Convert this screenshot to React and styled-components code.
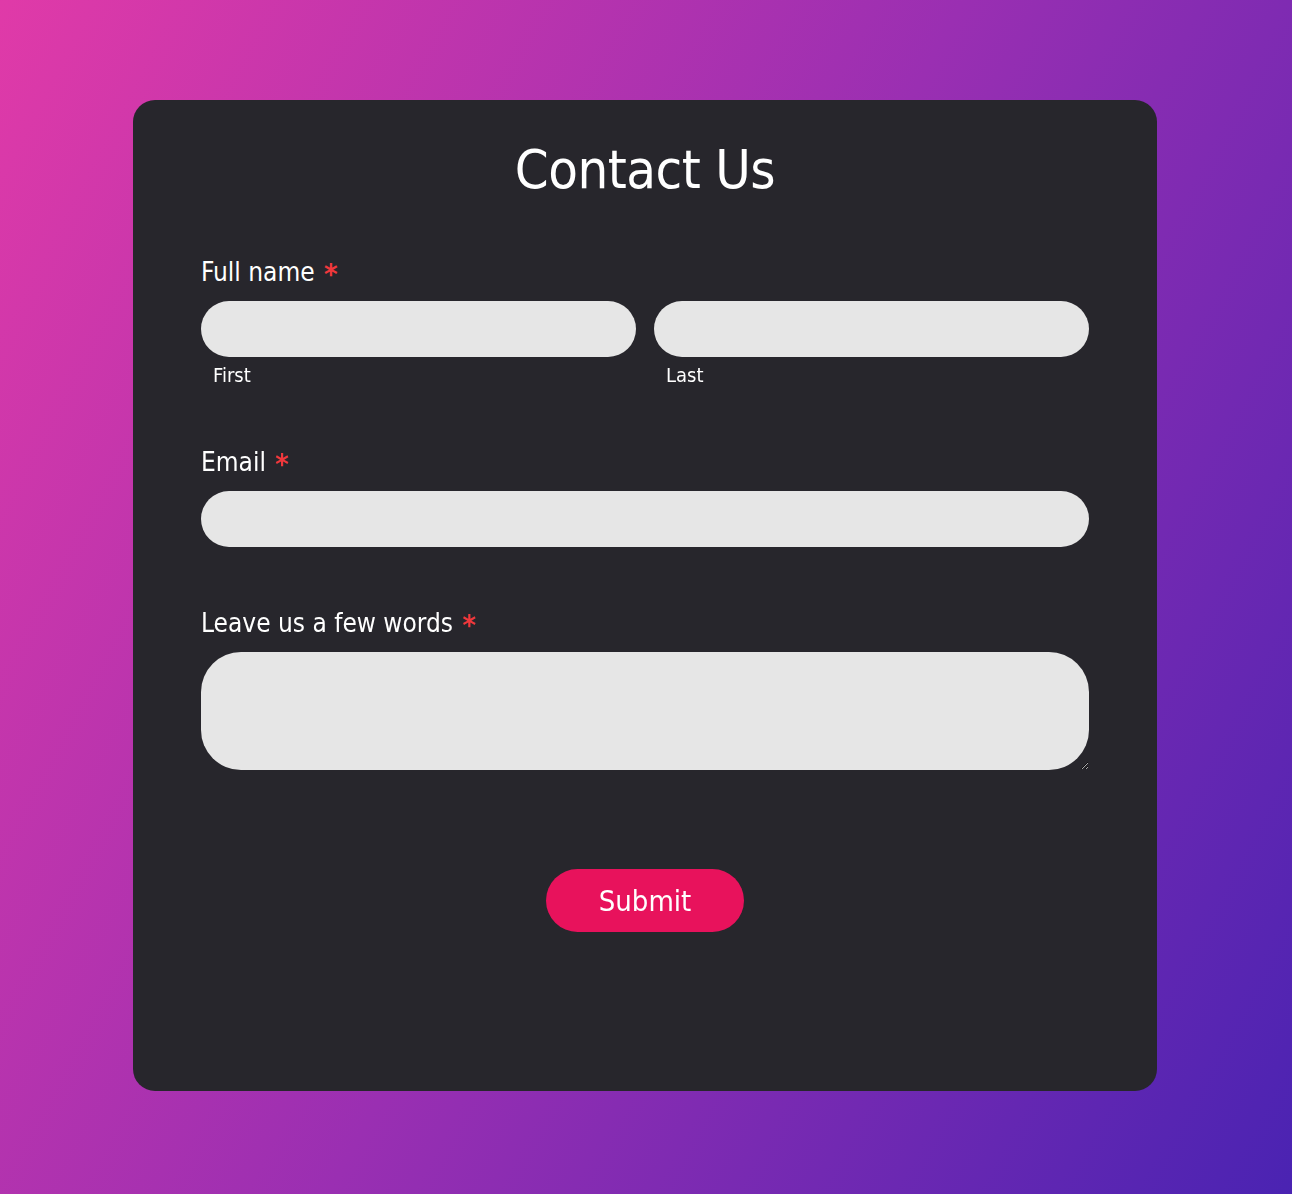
import React from "react"
import styled, { createGlobalStyle } from "styled-components"

const GlobalStyle = createGlobalStyle`
  html, body {
    margin: 0;
    padding: 0;
  }
  body {
    font-family: "DejaVu Sans Condensed", "DejaVu Sans", sans-serif;
    font-stretch: condensed;
    background: linear-gradient(118deg, #e03aa8 0%, #9a2fb2 50%, #4a23b2 100%);
    min-height: 1194px;
  }
`

const Page = styled.div`
  padding: 100px 135px 103px 133px;
  box-sizing: border-box;
`

const Card = styled.form`
  background: #27262c;
  border-radius: 22px;
  padding: 38px 68px 0 68px;
  height: 991px;
  box-sizing: border-box;
  color: #fff;
`

const Title = styled.h1`
  margin: 0 0 55px;
  text-align: center;
  font-weight: normal;
  font-size: 54px;
  line-height: 64px;
  letter-spacing: -0.5px;
`

const Field = styled.div`
  margin-bottom: ${(p) => p.gap || 0}px;
`

const Label = styled.label`
  display: block;
  font-size: 26px;
  line-height: 30px;
  margin-bottom: 14px;
`

const Star = styled.span`
  color: #f0383c;
  font-size: 29px;
  font-weight: bold;
  line-height: 20px;
  vertical-align: -3px;
  margin-left: 2px;
`

const Row = styled.div`
  display: flex;
  gap: 18px;
`

const Col = styled.div`
  flex: 1;
  display: flex;
  flex-direction: column;
`

const Input = styled.input`
  display: block;
  width: 100%;
  box-sizing: border-box;
  height: 56px;
  border: none;
  border-radius: 28px;
  background: #e6e6e6;
  padding: 0 16px;
  font-family: inherit;
  font-size: 22px;
  outline: none;
  caret-color: #111;
`

const SubLabel = styled.span`
  font-size: 20px;
  line-height: 24px;
  margin: 6px 0 0 12px;
`

const TextArea = styled.textarea`
  display: block;
  width: 100%;
  box-sizing: border-box;
  height: 118px;
  border: none;
  border-radius: 40px;
  background: #e6e6e6;
  padding: 16px 24px;
  font-family: inherit;
  font-size: 22px;
  outline: none;
  resize: vertical;
`

const Actions = styled.div`
  display: flex;
  justify-content: center;
  padding-top: 99px;
`

const Submit = styled.button`
  width: 198px;
  height: 63px;
  border: none;
  border-radius: 32px;
  background: #e8125c;
  color: #fff;
  font-family: inherit;
  font-size: 29px;
  cursor: pointer;
`

export default function App() {
  return (
    <>
      <GlobalStyle />
      <Page>
        <Card onSubmit={(e) => e.preventDefault()}>
          <Title>Contact Us</Title>
          <Field gap={60}>
            <Label>
              Full name <Star>*</Star>
            </Label>
            <Row>
              <Col>
                <Input autoFocus />
                <SubLabel>First</SubLabel>
              </Col>
              <Col>
                <Input />
                <SubLabel>Last</SubLabel>
              </Col>
            </Row>
          </Field>
          <Field gap={61}>
            <Label>
              Email <Star>*</Star>
            </Label>
            <Input type="email" />
          </Field>
          <Field>
            <Label>
              Leave us a few words <Star>*</Star>
            </Label>
            <TextArea />
          </Field>
          <Actions>
            <Submit type="submit">Submit</Submit>
          </Actions>
        </Card>
      </Page>
    </>
  )
}
